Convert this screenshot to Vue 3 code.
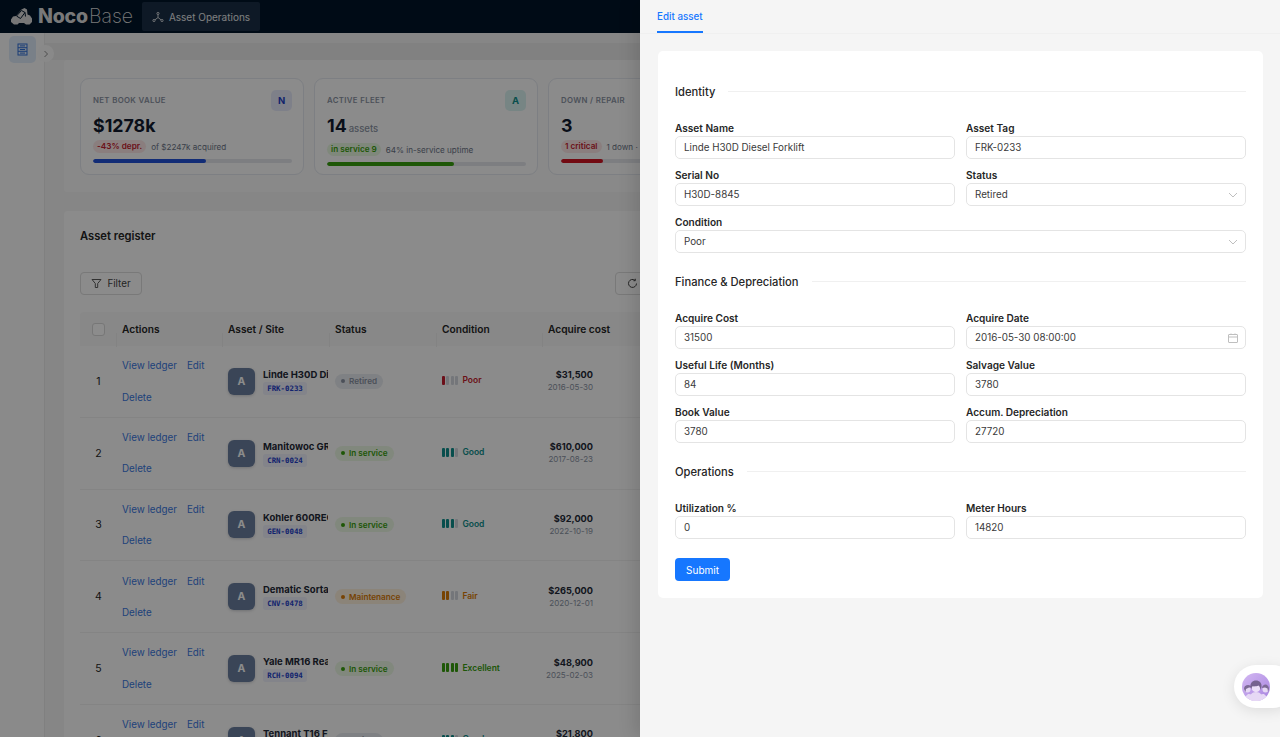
<script setup>
const stats = [
  { label: 'NET BOOK VALUE', letter: 'N', tile: 'tile-blue', value: '$1278k', unit: '', pill: '-43% depr.', pillClass: 'pill-red', note: 'of $2247k acquired', pct: 57, bar: 'bar-blue' },
  { label: 'ACTIVE FLEET', letter: 'A', tile: 'tile-teal', value: '14', unit: 'assets', pill: 'in service 9', pillClass: 'pill-green', note: '64% in-service uptime', pct: 64, bar: 'bar-green' },
  { label: 'DOWN / REPAIR', letter: 'D', tile: 'tile-red', value: '3', unit: '', pill: '1 critical', pillClass: 'pill-red', note: '1 down · 2 maint', pct: 21, bar: 'bar-red' }
]
const rows = [
  { n: 1, name: 'Linde H30D Diesel Forklift', tag: 'FRK-0233', status: 'Retired', sc: 'st-grey', cond: 'Poor', lvl: 1, cc: 'c-red', cost: '$31,500', date: '2016-05-30' },
  { n: 2, name: 'Manitowoc GR Crane', tag: 'CRN-0024', status: 'In service', sc: 'st-green', cond: 'Good', lvl: 3, cc: 'c-teal', cost: '$610,000', date: '2017-08-23' },
  { n: 3, name: 'Kohler 600REOZ Generator', tag: 'GEN-0048', status: 'In service', sc: 'st-green', cond: 'Good', lvl: 3, cc: 'c-teal', cost: '$92,000', date: '2022-10-19' },
  { n: 4, name: 'Dematic Sortation Line', tag: 'CNV-0478', status: 'Maintenance', sc: 'st-orange', cond: 'Fair', lvl: 2, cc: 'c-orange', cost: '$265,000', date: '2020-12-01' },
  { n: 5, name: 'Yale MR16 Reach Truck', tag: 'RCH-0094', status: 'In service', sc: 'st-green', cond: 'Excellent', lvl: 4, cc: 'c-green', cost: '$48,900', date: '2025-02-03' },
  { n: 6, name: 'Tennant T16 Floor Scrubber', tag: 'CLN-0112', status: 'Retired', sc: 'st-grey', cond: 'Good', lvl: 3, cc: 'c-teal', cost: '$21,800', date: '2021-04-12' }
]
</script>

<template>
  <div class="app">
    <header class="topbar">
      <div class="logo">
        <svg class="logo-mark" width="21" height="17" viewBox="0 0 21 17">
          <path fill="#d9d9d9" d="M0 11.500 2 8.500 5 8 10.500 1.500 13.500 0 16 1.500 16.500 6.500 19 7.500 21 10.500V14L18.500 16.500H15L13 15H8L6.500 16.500H3L0 14Z" />
          <path fill="none" stroke="#001529" stroke-width="1" d="M5.500 8 10.500 2.500 14 4.500 9.500 10.500ZM14 4.500 14.500 8.500" />
        </svg>
        <span class="noco">Noco</span><span class="base">Base</span>
      </div>
      <div class="menu-item">
        <svg width="12" height="12" viewBox="0 0 12 12" fill="none" stroke="#d0d4d9" stroke-width="1">
          <circle cx="6" cy="2.500" r="1.100" /><circle cx="2" cy="9.500" r="1.100" /><circle cx="10" cy="9.500" r="1.100" />
          <path d="M6 3.600V6.500M6 6.500 3 8.800M6 6.500 9 8.800" />
        </svg>
        <span>Asset Operations</span>
      </div>
    </header>

    <div class="layout">
      <aside class="sidebar">
        <div class="side-tile">
          <svg width="11" height="13" viewBox="0 0 11 13" fill="none" stroke="#2f6fd8" stroke-width="1">
            <rect x="1" y="1" width="9" height="11" />
            <path d="M1 4.700H10M1 8.300H10M3 2.900H8M3 6.500H8M3 10.100H8" />
          </svg>
        </div>
        <div class="side-toggle">
          <svg width="6" height="8" viewBox="0 0 6 8" fill="none" stroke="#8c8c8c" stroke-width="1"><path d="M1.500 1 4.500 4 1.500 7" /></svg>
        </div>
      </aside>

      <main class="content">
        <div class="tabband"></div>
        <section class="stats-block">
          <article v-for="s in stats" :key="s.label" class="stat">
            <div class="stat-top">
              <span class="stat-label">{{ s.label }}</span>
              <span class="stat-tile" :class="s.tile">{{ s.letter }}</span>
            </div>
            <div class="stat-value">{{ s.value }}<span v-if="s.unit" class="stat-unit">{{ s.unit }}</span></div>
            <div class="stat-meta">
              <span class="stat-pill" :class="s.pillClass">{{ s.pill }}</span>
              <span class="stat-note">{{ s.note }}</span>
            </div>
            <div class="track"><div class="fill" :class="s.bar" :style="{ width: s.pct + '%' }"></div></div>
          </article>
        </section>

        <section class="register">
          <h2 class="register-title">Asset register</h2>
          <div class="toolbar">
            <button class="tool-btn filter">
              <svg width="11" height="11" viewBox="0 0 11 11" fill="none" stroke="#595959" stroke-width="1"><path d="M1 1.500H10L6.700 5.500V9.500H4.300V5.500Z" /></svg>
              Filter
            </button>
            <button class="tool-btn refresh">
              <svg width="11" height="11" viewBox="0 0 11 11" fill="none" stroke="#434343" stroke-width="1"><path d="M9.500 5.500A4 4 0 1 1 8 2.300M8.300 .8V2.700H6.400" /></svg>
            </button>
          </div>
          <div class="table">
            <div class="thead grid">
              <div class="cell"><span class="check"></span></div>
              <div class="cell th">Actions</div>
              <div class="cell th">Asset / Site</div>
              <div class="cell th">Status</div>
              <div class="cell th">Condition</div>
              <div class="cell th">Acquire cost</div>
            </div>
            <div v-for="r in rows" :key="r.n" class="trow grid">
              <div class="cell num">{{ r.n }}</div>
              <div class="cell actions">
                <a>View ledger</a><a>Edit</a><a>Delete</a>
              </div>
              <div class="cell asset">
                <span class="avatar">A</span>
                <div class="asset-text">
                  <div class="asset-name">{{ r.name }}</div>
                  <span class="asset-tag">{{ r.tag }}</span>
                </div>
              </div>
              <div class="cell">
                <span class="status" :class="r.sc"><i class="dot"></i>{{ r.status }}</span>
              </div>
              <div class="cell">
                <span class="cond" :class="r.cc">
                  <span class="bars"><i v-for="b in 4" :key="b" :class="{ on: b <= r.lvl }"></i></span>
                  {{ r.cond }}
                </span>
              </div>
              <div class="cell cost">
                <div class="cost-box">
                  <div class="cost-val">{{ r.cost }}</div>
                  <div class="cost-date">{{ r.date }}</div>
                </div>
              </div>
            </div>
          </div>
        </section>
      </main>
    </div>

    <div class="mask"></div>

    <aside class="drawer">
      <nav class="tabs"><span class="tab">Edit asset</span></nav>
      <div class="form-card">
        <div class="divider"><span>Identity</span></div>
        <div class="fields">
          <label class="field"><span class="lab">Asset Name</span><span class="input">Linde H30D Diesel Forklift</span></label>
          <label class="field"><span class="lab">Asset Tag</span><span class="input">FRK-0233</span></label>
          <label class="field"><span class="lab">Serial No</span><span class="input">H30D-8845</span></label>
          <label class="field"><span class="lab">Status</span><span class="input">Retired
            <svg class="suffix" width="10" height="6" viewBox="0 0 10 6" fill="none" stroke="#bfbfbf" stroke-width="1"><path d="M1 1 5 5 9 1" /></svg></span></label>
          <label class="field wide"><span class="lab">Condition</span><span class="input">Poor
            <svg class="suffix" width="10" height="6" viewBox="0 0 10 6" fill="none" stroke="#bfbfbf" stroke-width="1"><path d="M1 1 5 5 9 1" /></svg></span></label>
        </div>
        <div class="divider"><span>Finance &amp; Depreciation</span></div>
        <div class="fields">
          <label class="field"><span class="lab">Acquire Cost</span><span class="input">31500</span></label>
          <label class="field"><span class="lab">Acquire Date</span><span class="input">2016-05-30 08:00:00
            <svg class="suffix" width="10" height="10" viewBox="0 0 10 10" fill="none" stroke="#bfbfbf" stroke-width="1"><rect x=".5" y="1.500" width="9" height="8" rx=".5" /><path d="M.5 4H9.500M3 .5V2M7 .5V2" /></svg></span></label>
          <label class="field"><span class="lab">Useful Life (Months)</span><span class="input">84</span></label>
          <label class="field"><span class="lab">Salvage Value</span><span class="input">3780</span></label>
          <label class="field"><span class="lab">Book Value</span><span class="input">3780</span></label>
          <label class="field"><span class="lab">Accum. Depreciation</span><span class="input">27720</span></label>
        </div>
        <div class="divider"><span>Operations</span></div>
        <div class="fields">
          <label class="field"><span class="lab">Utilization %</span><span class="input">0</span></label>
          <label class="field"><span class="lab">Meter Hours</span><span class="input">14820</span></label>
        </div>
        <button class="submit">Submit</button>
      </div>
    </aside>

    <div class="assistant">
      <svg width="28" height="28" viewBox="0 0 28 28">
        <defs>
          <linearGradient id="ag" x1="0" y1="0" x2="1" y2="1">
            <stop offset="0" stop-color="#d3b8f2" /><stop offset="1" stop-color="#a884e0" />
          </linearGradient>
          <clipPath id="ac"><circle cx="14" cy="14" r="14" /></clipPath>
        </defs>
        <circle cx="14" cy="14" r="14" fill="url(#ag)" />
        <g clip-path="url(#ac)">
          <path fill="#e6d8f5" d="M3 28c0-5 2-7 4-7s3 1 3 3l8 0c0-2 1-3 3-3s4 2 4 7Z" />
          <circle cx="5.500" cy="16.500" r="3" fill="#e6d8f5" />
          <path fill="#7d6a96" d="M2 16c0-3 2-4 4-4s3.500 1 3.500 2.500L7 14.500 4 16l-.5 3Z" />
          <circle cx="23.500" cy="16.500" r="3" fill="#e6d8f5" />
          <path fill="#7d6a96" d="M20 15c0-2 2-3.500 3.500-3.500S27 13 27 16l-1 3-.5-3.500-2.500-1Z" />
          <path fill="#e6d8f5" d="M7 28c0-6 3-9 7-9s7 3 7 9Z" />
          <circle cx="14" cy="14.500" r="4.500" fill="#ecdff8" />
          <path fill="#76638f" d="M8.500 14c-.5-4 2-6.500 5.500-6.500s6 2.500 5.500 6.500l-1 3c-.2-2-.8-3.500-2-4.500-2 1-5 1-6 .8-.8.800-1 2-1 3.200Z" />
        </g>
      </svg>
    </div>
  </div>
</template>

<style>
html, body { margin: 0; background: #f5f5f5; }
</style>

<style scoped>
.app {
  position: relative;
  width: 1280px;
  height: 737px;
  overflow: hidden;
  background: #f5f5f5;
  font-family: Inter, "Liberation Sans", sans-serif;
  font-size: 10.200px;
  color: #262626;
}
.topbar {
  height: 33px;
  background: #001529;
  display: flex;
  align-items: center;
  padding-left: 11px;
  box-sizing: border-box;
}
.logo { display: flex; align-items: center; width: 131px; color: #dcdcdc; font-size: 19.500px; line-height: 1; white-space: nowrap; }
.logo-mark { margin-right: 6px; flex: none; }
.noco { font-weight: 800; letter-spacing: -.2px; margin-right: 1px; }
.base { font-weight: 200; }
.menu-item {
  height: 29px;
  width: 118px;
  margin-top: 0;
  background: #1b2f45;
  border-radius: 2px;
  color: #e4e6e9;
  display: flex;
  align-items: center;
  justify-content: center;
  gap: 5px;
  font-size: 10px;
  box-sizing: border-box;
}
.layout { display: flex; height: 704px; }
.sidebar {
  width: 45px;
  flex: none;
  background: #fbfbfb;
  border-right: 1px solid #eaeaea;
  box-sizing: border-box;
  position: relative;
  padding: 3px 9px;
}
.side-tile {
  width: 27px; height: 27px; border-radius: 5px;
  background: #dde9f8;
  display: flex; align-items: center; justify-content: center;
}
.side-toggle {
  position: absolute; left: 37px; top: 12px;
  width: 17px; height: 17px; border-radius: 50%;
  background: #fafafa;
  display: flex; align-items: center; justify-content: center;
}
.content { flex: 1; min-width: 0; padding: 0 0 0 19px; }
.tabband { height: 27px; background: linear-gradient(#f5f5f5 10px, #ececec 10px); margin-left: -19px; }
.stats-block {
  background: #fafafa;
  padding: 18px 16px 17px;
  display: flex;
  gap: 10px;
  height: 132px;
  box-sizing: border-box;
  border-radius: 4px;
}
.stat {
  flex: 0 0 224px;
  height: 97px;
  box-sizing: border-box;
  background: #fdfdfd;
  border: 1px solid #e3e7ee;
  border-radius: 9px;
  padding: 11px 11px 0 12px;
}
.stat-top { display: flex; justify-content: space-between; align-items: flex-start; height: 21px; }
.stat-label { font-size: 7.800px; font-weight: 600; letter-spacing: .35px; color: #8a93a3; margin-top: 5px; }
.stat-tile {
  width: 21px; height: 21px; border-radius: 5px;
  display: flex; align-items: center; justify-content: center;
  font-size: 9.500px; font-weight: 700;
}
.tile-blue { background: #e6eafa; color: #1d3fc4; }
.tile-teal { background: #d9f2f0; color: #0d8f8a; }
.tile-red { background: #fbe4e4; color: #c41d2f; }
.stat-value { font-size: 17.800px; font-weight: 700; color: #111a2e; line-height: 23px; margin-top: 3px; }
.stat-unit { font-size: 9.500px; font-weight: 500; color: #8a93a3; margin-left: 2px; }
.stat-meta { display: flex; align-items: center; gap: 5px; margin-top: 3px; height: 13px; white-space: nowrap; }
.stat-pill { font-size: 8.200px; font-weight: 600; padding: 1px 4px; border-radius: 7px; line-height: 11px; }
.pill-red { background: #fbe6e6; color: #c4202e; }
.pill-green { background: #e8f7e0; color: #389e0d; }
.stat-note { font-size: 8.100px; color: #6b7486; }
.track { height: 4px; border-radius: 2px; background: #e3e6ec; margin-top: 6px; overflow: hidden; }
.fill { height: 100%; border-radius: 2px; }
.bar-blue { background: #2250d8; }
.bar-green { background: #389e0d; }
.bar-red { background: #cf1322; }

.register {
  margin-top: 19px;
  background: #fdfdfd;
  padding: 0 16px;
  height: 560px;
  overflow: hidden;
  border-radius: 4px;
}
.register-title { margin: 0; font-size: 11.200px; font-weight: 600; line-height: 16px; padding-top: 17px; color: #262626; }
.toolbar { display: flex; justify-content: space-between; margin-top: 28px; width: 569px; }
.tool-btn {
  height: 23px; border: 1px solid #dcdcdc; border-radius: 4px; background: #fdfdfd;
  display: inline-flex; align-items: center; justify-content: center; gap: 5px;
  font: inherit; color: #434343; padding: 0; box-sizing: border-box;
}
.filter { width: 62px; font-size: 9.800px; }
.refresh { width: 34px; }
.table { margin-top: 17px; width: 600px; }
.grid { display: grid; grid-template-columns: 35px 106px 107px 107px 106px 107px; }
.thead { height: 34px; background: #f7f7f7; align-items: center; border-radius: 4px 4px 0 0; }
.th { font-weight: 600; color: #262626; position: relative; }
.th::before { content: ""; position: absolute; left: 1px; top: 10px; height: 14px; width: 1px; background: #efefef; }
.cell { padding-left: 7px; box-sizing: border-box; display: flex; align-items: center; min-width: 0; }
.check { width: 11px; height: 11px; border: 1px solid #d9d9d9; border-radius: 3px; margin-left: 5px; background: #fff; }
.trow { height: 71.800px; border-bottom: 1px solid #f0f0f0; box-sizing: border-box; }
.num { justify-content: center; padding-left: 2px; font-size: 10.500px; }
.actions { flex-wrap: wrap; align-content: center; gap: 16.500px 10px; font-size: 9.800px; }
.actions a { line-height: 15px; color: #3a78e0; }
.asset { gap: 8px; overflow: hidden; }
.avatar {
  flex: none; width: 27px; height: 27px; border-radius: 6px; background: #6b7f9e;
  color: #fff; font-weight: 700; font-size: 10.500px;
  display: flex; align-items: center; justify-content: center;
  box-shadow: 0 1px 3px rgba(15, 23, 42, .2);
}
.asset-text { min-width: 0; flex: 1; overflow: hidden; }
.asset-name { font-size: 9.500px; font-weight: 700; color: #1f2937; white-space: nowrap; overflow: hidden; line-height: 13px; }
.asset-tag {
  display: inline-block; padding: 0 4.200px; border-radius: 3px; background: #eef0fb;
  color: #2340c8; font: 700 7.400px/13px "DejaVu Sans Mono", monospace;
}
.status {
  display: inline-flex; align-items: center; gap: 3px; height: 15px; padding: 0 6px;
  border-radius: 8px; font-size: 8.200px; font-weight: 600; white-space: nowrap;
}
.dot { width: 4px; height: 4px; border-radius: 50%; background: currentColor; margin-right: 1px; }
.st-grey { background: #e8ebf0; color: #8a93a3; }
.st-green { background: #ebf8e3; color: #389e0d; }
.st-orange { background: #fdf0dd; color: #d97a06; }
.cond { display: inline-flex; align-items: center; gap: 4.500px; font-size: 8.500px; font-weight: 600; margin-top: -2px; }
.bars { display: inline-flex; gap: 1.300px; }
.bars i { width: 3px; height: 9px; background: #d4d8df; border-radius: 1px; }
.bars i.on { background: currentColor; }
.c-red { color: #c41d2f; }
.c-teal { color: #0f8f8c; }
.c-orange { color: #d97a06; }
.c-green { color: #389e0d; }
.cost { padding-left: 0; }
.cost-box { width: 52px; text-align: right; white-space: nowrap; }
.cost-val { font-size: 9.200px; font-weight: 700; color: #1f2937; line-height: 13px; }
.cost-date { font-size: 8px; color: #8a93a3; line-height: 13px; }

.mask { position: absolute; inset: 0; background: rgba(0, 0, 0, .45); }

.drawer {
  position: absolute; top: 0; right: 0; bottom: 0; width: 640px;
  background: #f5f5f5;
  box-shadow: -6px 0 16px rgba(0, 0, 0, .12);
}
.tabs { height: 34px; border-bottom: 1px solid #f0f0f0; padding-left: 17px; box-sizing: border-box; display: flex; }
.tab {
  color: #1677ff; font-size: 9.800px; font-weight: 500; height: 33px; line-height: 33px;
  border-bottom: 2px solid #1677ff; box-sizing: border-box; margin-bottom: -1px;
}
.form-card {
  margin: 17px 17px 0 18px;
  padding: 0 17px;
  height: 547px;
  box-sizing: border-box;
  background: #fff;
  border-radius: 5px;
  overflow: hidden;
}
.divider { display: flex; align-items: center; gap: 13px; height: 17px; font-size: 11.200px; font-weight: 500; margin-top: 32px; margin-bottom: 19px; color: #262626; }
.divider::after { content: ""; flex: 1; border-top: 1px solid #f0f0f0; }
.fields + .divider { margin-top: 20px; }
.fields { display: grid; grid-template-columns: 1fr 1fr; column-gap: 11px; row-gap: 7px; }
.field { display: flex; flex-direction: column; min-width: 0; }
.field.wide { grid-column: 1 / -1; }
.lab { font-size: 10.100px; font-weight: 600; line-height: 15px; padding-top: 2px; color: #262626; height: 17px; box-sizing: border-box; }
.input {
  position: relative; height: 23px; box-sizing: border-box; border: 1px solid #e4e4e4; border-radius: 5px;
  background: #fff; padding: 0 8px; line-height: 21px; font-size: 9.800px; color: #3a3a3a;
}
.suffix { position: absolute; right: 7.500px; top: 50%; transform: translateY(-50%); }
.submit {
  display: block; margin-top: 19px; width: 55px; height: 23px; border: 0; border-radius: 4px;
  background: #1677ff; color: #fff; font: inherit; font-size: 10px; padding: 0;
}
.assistant {
  position: absolute; left: 1234px; top: 665px; width: 60px; height: 43px;
  background: #fff; border-radius: 22px;
  box-shadow: 0 3px 14px rgba(0, 0, 0, .1);
  display: flex; align-items: center; padding-left: 8px; box-sizing: border-box;
}
</style>
